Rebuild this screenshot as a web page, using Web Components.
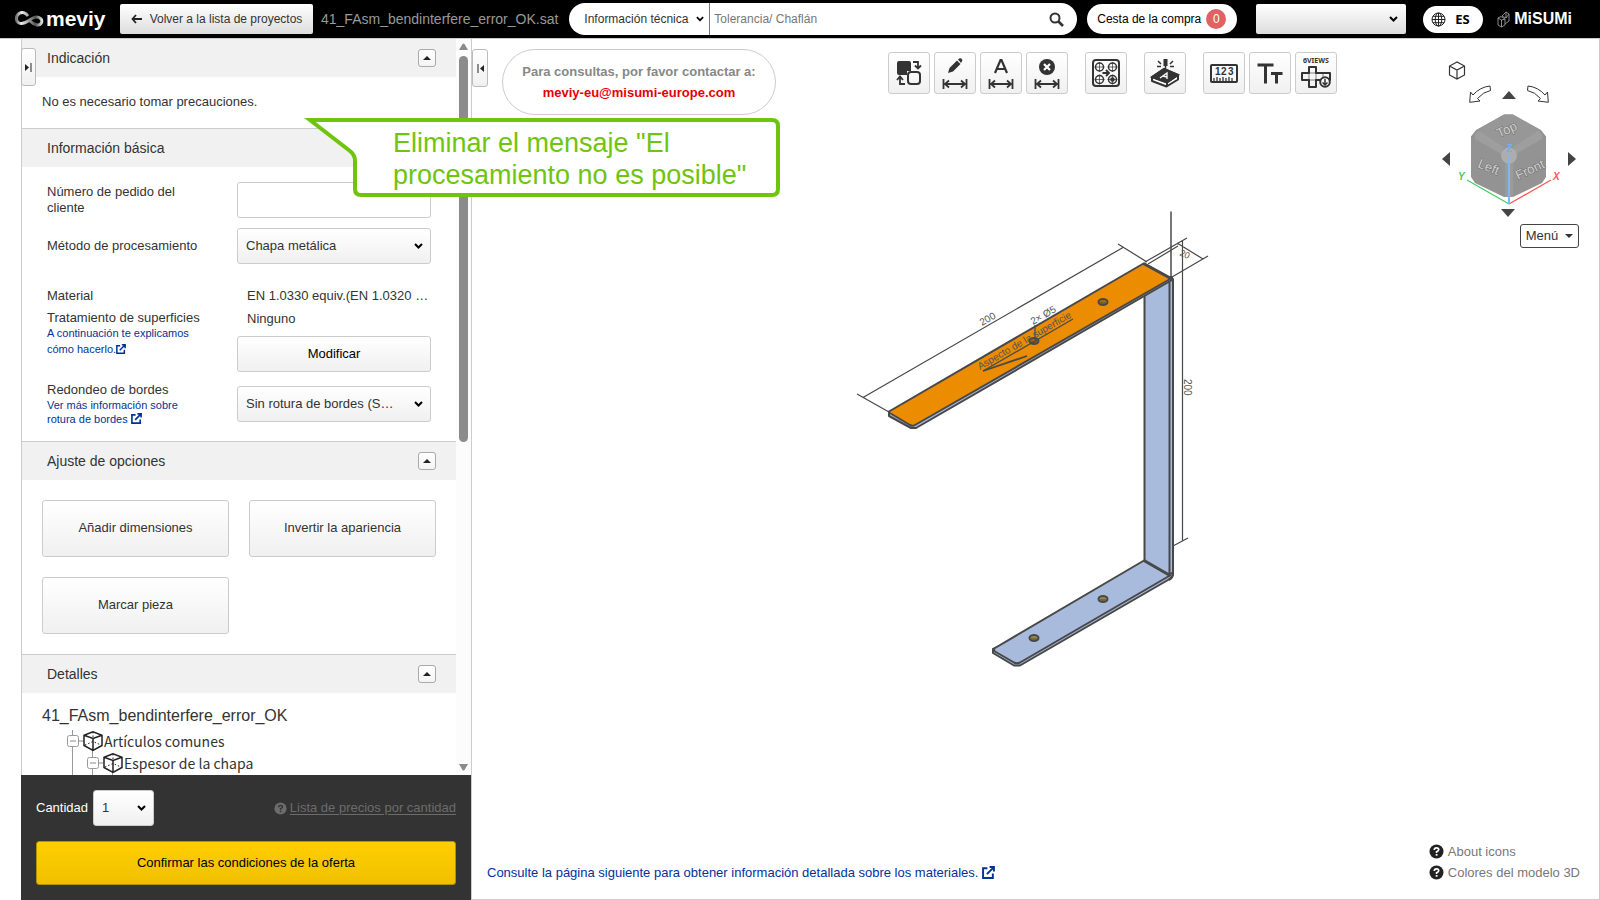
<!DOCTYPE html>
<html lang="es">
<head>
<meta charset="utf-8">
<title>meviy</title>
<style>
html,body{margin:0;height:100%;}
body{font:13px/16px "Liberation Sans",Arial,sans-serif;color:#333;background:#fff;overflow:hidden;}
</style>
</head>
<body>
<meviy-app></meviy-app>
<script>
const base = `
*{box-sizing:border-box}
button,input,select{font:inherit;color:inherit;margin:0}
button{cursor:pointer;padding:0}
a{color:#003399;text-decoration:none}
svg{display:block;flex:none}
.btn,.sel select{border:1px solid #ccc;border-radius:3px;background:linear-gradient(#fff,#f0f0f0)}
.sel{display:grid;align-items:center}
.sel select{grid-area:1/1;appearance:none;width:100%;height:36px;padding:0 36px 0 8px;outline:0;text-overflow:ellipsis}
.sel svg{grid-area:1/1;justify-self:end;margin-right:8px;pointer-events:none}
`;
const chev = `<svg width="9" height="6" viewBox="0 0 9 6"><path d="M1 1l3.5 3.5L8 1" fill="none" stroke="#000" stroke-width="2"/></svg>`;
const ext = s => `<svg class="ext" width="${s}" height="${s}" viewBox="0 0 12 12"><path d="M5 2H1v9h9V7M7 1h4v4M11 1L4.500 7.500" fill="none" stroke="#003399" stroke-width="1.800"/></svg>`;
const help = (c, k) => `<svg width="15" height="15" viewBox="0 0 15 15"><circle cx="7.500" cy="7.500" r="7" fill="${c}"/><path d="M5.300 6Q5.300 3.900 7.500 3.900T9.700 5.800Q9.700 7 7.600 7.700V8.900" fill="none" stroke="${k}" stroke-width="1.700"/><rect x="6.700" y="10" width="1.800" height="1.700" fill="${k}"/></svg>`;

function define(name, css, html) {
  const t = document.createElement('template');
  t.innerHTML = `<style>${base}${css}</style>${html}`;
  customElements.define(name, class extends HTMLElement {
    constructor() { super(); this.attachShadow({mode: 'open'}).append(t.content.cloneNode(true)); }
  });
}

define('meviy-app', `
:host{display:flex;flex-direction:column;height:100vh}
main{flex:1;min-height:0;display:flex;padding-left:21px;position:relative}
view-area{flex:1;min-width:0}
call-out{position:absolute;left:304px;top:79px;z-index:5}
`, `<top-bar></top-bar><main><side-panel></side-panel><view-area></view-area><call-out>Eliminar el mensaje "El procesamiento no es posible"</call-out></main>`);

define('top-bar', `
:host{display:flex;align-items:center;height:39px;padding:0 28px 0 14px;background:#000;border-bottom:1px solid #ccc;font-size:12px;color:#333}
.logo{display:flex;align-items:center;color:#fff;font-weight:700;width:106px;gap:2px;font-size:21px;line-height:32px}
.back{height:30px;width:193px;border:0;border-radius:2px;background:linear-gradient(#fff,#ddd);display:flex;align-items:center;justify-content:center;gap:8px}
.file{font-size:14px;color:#999;margin:0 11px 0 8px;white-space:nowrap}
form{display:flex;align-items:center;flex:1;height:32px;border-radius:16px;background:#fff;overflow:hidden;padding-right:13px}
form .sel{width:141px;border-right:1px solid #777}
form .sel select{border:0;background:none;padding:0 20px 0 15px;height:32px}
form .sel svg{margin-right:5px}
input{flex:1;border:0;outline:0;background:none;min-width:0;padding:0 4px;height:32px}
input::placeholder{color:#777;opacity:1}
form button{border:0;background:none}
.cart{margin-left:10px;width:150px;height:30px;border:0;border-radius:15px;background:#fff;color:#000;display:flex;align-items:center;gap:5px;padding-left:10px}
.cart span{width:20px;height:20px;border-radius:10px;background:#e06262;color:#fff;line-height:20px}
.acct{width:150px;margin-left:19px}
.acct select{height:30px;border:0;border-radius:2px;background:linear-gradient(#fff,#ddd)}
.lang{margin:0 14px 0 17px;width:60px;height:27px;border:0;border-radius:14px;background:#fff;color:#000;display:flex;align-items:center;gap:9px;padding-left:8px;font:700 13px "Noto Sans",sans-serif}
.mis{display:flex;align-items:center;gap:4px;color:#fff;font-weight:700;font-size:16px}
`, `
<a class="logo" href="#"><svg width="30" height="18" viewBox="0 0 30 18"><defs><linearGradient id="g"><stop stop-color="#777"/><stop offset=".2" stop-color="#eee"/><stop offset=".5" stop-color="#999"/><stop offset=".75" stop-color="#555"/><stop offset="1" stop-color="#ddd"/></linearGradient></defs><path d="M14 6C12 2.500 8 1.500 5 3.500C1.500 6 1.500 11 5 13C8 14.500 12 12.500 15 10.500C19 7.500 24 5.500 27 9C29 11.500 27 15.500 23 15C20 14.600 18 13 16 11" fill="none" stroke="url(#g)" stroke-width="3"/></svg>meviy</a>
<button class="back"><svg width="11" height="10" viewBox="0 0 11 10"><path d="M5 1L1.500 5L5 9M1.500 5H11" fill="none" stroke="#222" stroke-width="1.800"/></svg>Volver a la lista de proyectos</button>
<span class="file">41_FAsm_bendinterfere_error_OK.sat</span>
<form><span class="sel"><select aria-label="Tipo"><option>Información técnica</option></select>${chev.replace('width="9"','width="8"')}</span><input aria-label="Buscar" placeholder="Tolerancia/ Chaflán"><button type="button" aria-label="Buscar"><svg width="15" height="15" viewBox="0 0 15 15"><circle cx="6" cy="6" r="4.500" fill="none" stroke="#333" stroke-width="2"/><path d="M9.500 9.500L14 14" stroke="#333" stroke-width="2.600"/></svg></button></form>
<button class="cart">Cesta de la compra<span>0</span></button>
<span class="sel acct"><select aria-label="Cuenta"><option></option></select>${chev}</span>
<button class="lang"><svg width="15" height="15" viewBox="0 0 15 15" fill="none" stroke="#222"><circle cx="7.500" cy="7.500" r="6.500"/><ellipse cx="7.500" cy="7.500" rx="3.300" ry="6.500"/><path d="M7.500 1v13M1 7.500h13M2 4.300h11M2 10.700h11"/></svg>ES</button>
<a class="mis" href="#"><svg width="13" height="17" viewBox="0 0 13 17" fill="none" stroke="#aaa" stroke-width=".8"><path d="M1 7l3-1.500L8 8v6l-3.500 2L1 14zM1 7l3.500 2V16M4.500 9L8 8M5 5l4-4 3 2v7l-4 3M9 1v6L5 5M9 7l3-4"/></svg>MiSUMi</a>`);

define('call-out', `
:host{display:grid;width:477px;height:80px;font-size:27px;line-height:32px;color:#6fc40e}
svg,p{grid-area:1/1}
p{margin:9px 20px 0 89px}
`, `<svg width="477" height="80" viewBox="0 0 477 80"><path d="M6 2H468Q474 2 474 8V71Q474 77 468 77H57Q51 77 51 71V43Q51 37 46 33Z" fill="#fff" stroke="#6fc40e" stroke-width="4" stroke-miterlimit="8"/></svg><p><slot></slot></p>`);

define('panel-section', `
:host{display:block;border-bottom:1px solid #ccc}
header{display:flex;align-items:center;justify-content:space-between;height:38px;padding:0 20px 0 25px;background:#f1f1f1}
h2{margin:0;font-size:14px;font-weight:400}
button{width:18px;height:18px;border:1px solid #aaa;border-radius:3px;background:linear-gradient(#fff,#f4f4f4);display:grid;place-items:center}
`, `<header><h2><slot name="title"></slot></h2><button aria-label="Plegar"><svg width="8" height="4" viewBox="0 0 8 4"><path d="M0 4L4 0l4 4z" fill="#222"/></svg></button></header><slot></slot>`);

define('side-panel', `
:host{display:flex;flex-direction:column;width:450px;flex:none;position:relative}
.wrap{flex:1;min-height:0;display:flex;border-left:1px solid #ccc}
.body{flex:1;min-width:0;overflow:hidden}
.bar{width:15px;background:#fcfcfc;display:flex;flex-direction:column;align-items:center;padding:4px 1px 4px 0}
.bar i{width:9px;border-radius:5px;background:#8b8b8b;height:53%;margin:6px 0 auto}
.tab{position:absolute;left:0;top:9px;width:15px;height:38px;border:1px solid #bbb;border-radius:3px;background:linear-gradient(#fff,#f0f0f0);display:grid;place-items:center}
.note{margin:0;padding:15px 20px 16px;line-height:20px}
`, `
<div class="wrap"><div class="body">
<panel-section><span slot="title">Indicación</span><p class="note">No es necesario tomar precauciones.</p></panel-section>
<panel-section><span slot="title">Información básica</span><basic-form></basic-form></panel-section>
<panel-section><span slot="title">Ajuste de opciones</span><option-buttons></option-buttons></panel-section>
<panel-section><span slot="title">Detalles</span><part-tree></part-tree></panel-section>
</div><div class="bar"><svg width="9" height="7"><path d="M0 7L3.500 1Q4.500 0 5.500 1L9 7z" fill="#8b8b8b"/></svg><i></i><svg width="9" height="7"><path d="M0 0L3.500 6Q4.500 7 5.500 6L9 0z" fill="#8b8b8b"/></svg></div></div>
<quote-footer></quote-footer>
<button class="tab" aria-label="Panel"><svg width="7" height="9" viewBox="0 0 7 9"><path d="M0 1l4 3.500L0 8zM5.500 0h1v9h-1z" fill="#222"/></svg></button>`);

define('basic-form', `
:host{display:grid;grid-template-columns:minmax(0,1fr) 194px;column-gap:34px;row-gap:10px;padding:15px 25px}
input{width:100%;height:36px;border:1px solid #ccc;border-radius:3px;background:#fff}
:host>*{align-self:center}
.l{display:flex;flex-direction:column}
.top{align-self:start;margin-top:11px;line-height:22px}
.lk{font-size:11px;line-height:16px;margin-top:-4px}
.lk2{font-size:11px;line-height:14px}
.ext{display:inline-block;vertical-align:-1px}
.v{display:flex;flex-direction:column}
.v span{padding-left:10px;line-height:22px;margin-bottom:1px;white-space:nowrap;overflow:hidden;text-overflow:ellipsis}
.v .btn{height:36px;margin-top:5px;color:#000}
`, `
<label for="n">Número de pedido del<br>cliente</label><input id="n">
<label for="m">Método de procesamiento</label><span class="sel"><select id="m"><option>Chapa metálica</option></select>${chev}</span>
<div class="l top"><span>Material</span><span>Tratamiento de superficies</span><a class="lk" href="#">A continuación te explicamos<br>cómo hacerlo.${ext(10)}</a></div>
<div class="v top"><span>EN 1.0330 equiv.(EN 1.0320 …</span><span>Ninguno</span><button class="btn">Modificar</button></div>
<div class="l"><label for="r">Redondeo de bordes</label><a class="lk2" href="#">Ver más información sobre<br>rotura de bordes ${ext(11)}</a></div><span class="sel"><select id="r"><option>Sin rotura de bordes (S…</option></select>${chev}</span>`);

define('option-buttons', `
:host{display:grid;grid-template-columns:1fr 1fr;gap:20px;padding:20px}
.btn{height:57px;padding-bottom:2px}
`, `<button class="btn">Añadir dimensiones</button><button class="btn">Invertir la apariencia</button><button class="btn">Marcar pieza</button>`);

const cube = x => `<g transform="translate(${x} 1)" fill="none" stroke="#222" stroke-width="1.500"><path d="M10 .7L1 4.200V14.500L10 19.500L19 14.500V4.200zM1 4.200L10 7.500L19 4.200M10 7.500V19.500"/><path d="M10 1V7M2 14L10 10.500L18 14" stroke-width="1" stroke-dasharray="1.500 2"/></g>`;
const box = x => `<rect x="${x}" y="5.500" width="11" height="11" rx="2" fill="#fff" stroke="#999"/><path d="M${x+2.500} 11h6M${x+11} 11h5" stroke="#888"/>`;
define('part-tree', `
:host{display:block;padding:13px 20px}
h3{margin:0 0 4px;font-size:16px;line-height:20px;font-weight:400}
ul{list-style:none;margin:0;padding:0 0 0 25px;font:14px/22px "Noto Sans CJK JP","Noto Sans",sans-serif}
li{display:flex;height:22px}
`, `<h3>41_FAsm_bendinterfere_error_OK</h3><ul>
<li><svg width="37" height="22"><path d="M5.500 0V22M25.500 18v4" stroke="#999"/>${box(.5)}${cube(16)}</svg>Artículos comunes</li>
<li><svg width="57" height="22"><path d="M5.500 0V22M25.500 0V22M45.500 20v2" stroke="#999"/>${box(20.5)}${cube(36)}</svg>Espesor de la chapa</li>
<li><svg width="77" height="22"><path d="M5.500 0V22M25.500 0V22M45.500 0V22" stroke="#999"/></svg></li></ul>`);

define('quote-footer', `
:host{display:block;background:#333;padding:15px;color:#fff}
.r{display:flex;align-items:center;margin-bottom:15px}
.sel{width:61px;margin-left:5px;color:#333}
.r a{margin-left:auto;display:flex;align-items:center;gap:3px;color:#6c6c6c}
.r u{text-underline-offset:2px}
.ok{width:100%;height:44px;border:1px solid #b39100;border-radius:3px;background:linear-gradient(#ffcf00,#f0c000);color:#000}
`, `<div class="r"><label for="q">Cantidad</label><span class="sel"><select id="q"><option>1</option></select>${chev}</span><a href="#">${help('#6c6c6c','#333').replace('width="15" height="15"','width="13" height="13"')}<u>Lista de precios por cantidad</u></a></div><button class="ok">Confirmar las condiciones de la oferta</button>`);

const dim = `<path d="M8.500 26v10M31.500 26v10M10 31h20M14 27.500L10 31l4 3.500M26 27.500l4 3.500l-4 3.500" fill="none" stroke="#333" stroke-width="1.800"/>`;
const tool = (n, s) => `<button class="btn" aria-label="${n}"><svg width="40" height="40" viewBox="0 0 40 40" fill="none" stroke="#333" stroke-width="2">${s}</svg></button>`;
define('tool-bar', `
:host{display:flex;gap:17px}
div{display:flex;gap:4px}
.btn{width:42px;height:42px}
`, `<div>
${tool('Invertir', `<path d="M10 8h10q2 0 2 2v8h-4v4h-8q-2 0-2-2V10q0-2 2-2z" fill="#333" stroke="none"/><rect x="19" y="19" width="12" height="12" rx="3"/><path d="M24 9h5v6M26 12.500l3 3l3-3M16 31h-5v-7M8 27l3-3.500l3 3.500" stroke-width="1.800"/>`)}
${tool('Editar cota', `<path d="M13 20l1.500-5L22 7.500l3.500 3.500L18 18.500zM23 6.500l1.200-1q1.300-.8 2.500.3t.3 2.500L26 10z" fill="#333" stroke="none"/>${dim}`)}
${tool('Cota automática', `<path d="M14 20L19.500 7h1L26 20M16 16h8" stroke-width="2.200"/>${dim}`)}
${tool('Borrar cota', `<circle cx="20" cy="14" r="8" fill="#333" stroke="none"/><path d="M17 11l6 6M23 11l-6 6" stroke="#fff" stroke-width="2.200"/>${dim}`)}
</div><div>${tool('Agujeros', `<rect x="7" y="7" width="26" height="26" rx="3"/><g stroke-width="1.500"><circle cx="13.500" cy="14" r="4"/><circle cx="26.500" cy="14" r="4"/><circle cx="13.500" cy="26.500" r="4"/><circle cx="26.500" cy="26.500" r="4"/><circle cx="26.500" cy="26.500" r="1.500" fill="#333"/><path d="M13.500 9v10M8.500 14h10M26.500 9v10M21.500 14h10M13.500 21.500v10M8.500 26.500h10M26.500 21.500v10M21.500 26.500h10" stroke-width=".7"/><path d="M16.500 20h6.500M20 17l3 3l-3 3" stroke-width="1.800"/></g>`)}
</div><div>${tool('Marcar', `<path d="M7 24L19 16L33 22L22 29.500zM7 24v4l14.500 5.500L33 26.500v-4M22 29.500v4" fill="#fff" stroke-linejoin="round"/><path d="M7 24L19 16L33 22L22 29.500z" fill="#333"/><path d="M15 25l7-5v6M18 23l4 1" stroke="#fff" stroke-width="1.300"/><path d="M20.500 6v7" stroke-width="4"/><path d="M20.500 13v3M13 8l3 3M28 8l-3 3M12 13.500h4M25 13.500h4" stroke-width="1.500"/>`)}
</div><div>
${tool('Regla', `<rect x="7" y="12" width="26" height="17" rx="1"/><path d="M10 28v-3M13 28v-4M16 28v-3M19 28v-4M22 28v-3M25 28v-4M28 28v-3" stroke-width="1.300"/><text x="11" y="22" font-size="10" font-weight="700" fill="#333" stroke="none" font-family="Liberation Sans">1</text><text x="17" y="22" font-size="10" font-weight="700" fill="#333" stroke="none" font-family="Liberation Sans">2</text><text x="24" y="22" font-size="10" font-weight="700" fill="#333" stroke="none" font-family="Liberation Sans">3</text>`)}
${tool('Texto', `<path d="M7.500 12h16M15.500 12v18.500M21 20.500h11.500M26.500 20.500v10" stroke-width="3"/>`)}
${tool('Seis vistas', `<text x="7" y="10" font-size="7" font-weight="700" fill="#333" stroke="none" font-family="Noto Sans">6VIEWS</text><path d="M13 14h7v6h14v7H20v7h-7v-7H6v-7h7z" stroke-linejoin="round"/><path d="M13 20h7v7h-7zM27 20v7" stroke-width=".6"/><circle cx="29" cy="29" r="4.800" fill="#fff"/><path d="M29 26v6M26.500 29.500l2.500 2.500l2.500-2.500" stroke-width="1.500"/>`)}
</div>`);

define('nav-cube', `
:host{display:flex;flex-direction:column;width:137px}
button{border:0;background:none;display:block}
.home{margin-left:6px;align-self:flex-start}
.t{display:flex;justify-content:center;align-items:center;gap:10px;width:134px;margin-top:5px}
.m{display:flex;justify-content:space-between;align-items:center;width:134px;margin-top:10px;height:92px}
.d{margin:4px 0 0 58px;align-self:flex-start}
.menu{align-self:flex-end;margin-top:6px;width:59px;height:24px;border:1px solid #444;border-radius:3px;display:flex;align-items:center;justify-content:center;gap:7px;background:#fff}
text{font-family:"Liberation Sans",sans-serif}
`, `
<button class="home" aria-label="Inicio"><svg width="18" height="19" viewBox="0 0 18 19" fill="none" stroke="#333" stroke-width="1.200"><path d="M9 1L1.500 5V14L9 18l7.500-4V5zM1.500 5L9 9l7.500-4M9 9v9"/></svg></button>
<div class="t"><button aria-label="Girar a la izquierda"><svg width="22" height="18" viewBox="0 0 22 18" fill="#fff" stroke="#333"><path d="M21 1Q11 2 4 10L1.500 7L.7 17.300L11 16L8.500 13.500Q14 7 21.500 5.500z"/></svg></button><button aria-label="Arriba"><svg width="16" height="9"><path d="M1 9L8 1l7 8z" fill="#444"/></svg></button><button aria-label="Girar a la derecha"><svg width="22" height="18" viewBox="0 0 22 18" fill="#fff" stroke="#333"><path d="M1 1Q11 2 18 10L20.500 7L21.300 17.300L11 16L13.500 13.500Q8 7 .5 5.500z"/></svg></button></div>
<div class="m"><button aria-label="Izquierda"><svg width="8" height="14"><path d="M8 0v14L0 7z" fill="#444"/></svg></button>
<svg width="102" height="92" viewBox="1458 113 102 92"><path d="M1504 114.500h9L1541 130l5 6.500V177l-4 6L1513 197h-9L1475 183l-4-6V136.500l5-6.500z" fill="#939393"/><path d="M1504 114.500h9L1541 131L1511 148.500h-5L1477 131z" fill="#979797"/><path d="M1475 134l4-3l25 16q-3 4-1 8l-28-16zM1542 134l-4-3l-25 16q3 4 1 8l28-16z" fill="#9e9e9e"/><path d="M1505 162h8v35h-8z" fill="#9b9b9b"/><circle cx="1509" cy="155.500" r="8" fill="#adadad"/><g font-size="13" fill="#d0d0d0" stroke="#6e6e6e" stroke-width="1" paint-order="stroke"><text transform="translate(1499 138) rotate(-25)">Top</text><text transform="translate(1477 167) rotate(22)">Left</text><text transform="translate(1518 180) rotate(-25)">Front</text></g><path d="M1509 204L1467 180" stroke="#4c6" stroke-width="1.300"/><path d="M1509 204L1551 180" stroke="#f55" stroke-width="1.300"/><path d="M1509 204V156" stroke="#7ab8f8" stroke-width="2"/><g font-size="10" font-style="italic" font-weight="700"><text x="1458" y="180" fill="#4c6">Y</text><text x="1553" y="180" fill="#f55">X</text><text x="1506" y="152" fill="#6db1f5">Z</text></g></svg>
<button aria-label="Derecha"><svg width="8" height="14"><path d="M0 0v14L8 7z" fill="#444"/></svg></button></div>
<button class="d" aria-label="Abajo"><svg width="16" height="9"><path d="M1 0L8 8l7-8z" fill="#444"/></svg></button>
<button class="menu">Menú<svg width="8" height="4"><path d="M0 0L4 4L8 0z" fill="#333"/></svg></button>`);

const hole = (x, y, c) => `<ellipse cx="${x}" cy="${y}" rx="4.500" ry="3" fill="${c}" stroke="#484848" stroke-width="2"/><path d="M${x-3} ${y+1}h6" stroke="#484848" stroke-width="1"/>`;
define('part-model', `:host{display:block}svg{width:100%;height:100%}text{font-family:"Liberation Sans",sans-serif;fill:#555}`, `
<svg viewBox="472 39 1127 860" preserveAspectRatio="xMidYMin meet" fill="none" stroke="#484848" stroke-width="2" stroke-linejoin="round">
<path d="M1171 211.500V278" stroke="#777"/>
<path d="M1144.500 290V561L1170 576V277z" fill="#a9bbdd"/>
<path d="M1170 279h3V574q0 4-4 6" fill="#a9bbdd"/><path d="M1169.500 279V576" stroke-width="2"/><path d="M1173 279V573" stroke-width="2"/>
<path d="M993 649V653L1014 665.500h6L1168 580q5-3 5-7L1168 574z" fill="#a9bbdd"/>
<path d="M995 648L1144 560.500L1170 575.500L1020 662.500q-3 1.500-6 0L995 651.500q-2-2 0-3.500z" fill="#a9bbdd"/>
<path d="M1144 560.500L1170 575.500" stroke-width="3"/>
<path d="M889 412V416L911 428h5L1172 280V277z" fill="#a9bbdd"/>
<path d="M889 411.500L1143.500 263.500L1171 278.500L915 425q-2 1.500-5 0L889 412.500z" fill="#ec8c00"/>
<path d="M1143.500 263.500L1171 278.500" stroke-width="3"/>
${hole(1103,302,'#a87300')}${hole(1034,341,'#a87300')}${hole(1103,599,'#9c8740')}${hole(1034,638,'#9c8740')}
<g stroke-width="1.200"><path d="M863 397.500L1123 247.500M857 394L889 412M1118 244L1147 262M1145 262L1187 238M1148 264L1178 246M1177 243L1203 259M1172 277L1208 256M1182.500 240V541M1173 546L1188 538M1035 325V341M983 371L1073 319"/></g><path d="M983 371L1027 356" stroke-width="1.800"/>
<g stroke="none"><text font-size="10" transform="translate(982 326) rotate(-30)">200</text><text font-size="10" transform="translate(1033 325) rotate(-30)">2× Ø5</text><text font-size="10" transform="translate(980 370) rotate(-30)">Aspecto de la superficie</text><text font-size="10" transform="translate(1184 379) rotate(90)">200</text><text font-size="9" transform="translate(1179 255) rotate(25)">20</text></g>
</svg>`);

define('view-area', `
:host{display:flex;flex-direction:column;justify-content:space-between;position:relative;border:1px solid #ccc;border-top:0}
part-model{position:absolute;inset:0;pointer-events:none}
.top{display:flex;align-items:flex-start;padding-right:20px}
.tab{width:16px;height:38px;margin-top:10px;border:1px solid #bbb;border-radius:3px;background:linear-gradient(#fff,#f0f0f0);display:grid;place-items:center}
.contact{margin:10px auto 0 14px;width:274px;height:66px;border:1px solid #ccc;border-radius:33px;font-weight:700;line-height:21px;color:#888;text-align:center;padding-top:11px}
.contact a{color:#e60000;display:block}
tool-bar{margin-top:13px}
nav-cube{margin:22px 0 0 105px}
.bot{display:flex;justify-content:space-between;align-items:flex-end;padding:0 19px 16px 15px;line-height:21px}
.bot a{display:flex;align-items:center;gap:4px}
.bot div a{color:#777}
`, `
<part-model></part-model>
<div class="top"><button class="tab" aria-label="Vista"><svg width="7" height="9" viewBox="0 0 7 9"><path d="M7 1L3 4.500L7 8zM.5 0h1v9h-1z" fill="#222"/></svg></button>
<div class="contact">Para consultas, por favor contactar a:<a href="mailto:meviy-eu@misumi-europe.com">meviy-eu@misumi-europe.com</a></div>
<tool-bar></tool-bar><nav-cube></nav-cube></div>
<div class="bot"><a href="#">Consulte la página siguiente para obtener información detallada sobre los materiales. ${ext(13)}</a><div><a href="#">${help('#222','#fff')}About icons</a><a href="#">${help('#222','#fff')}Colores del modelo 3D</a></div></div>`);
</script>
</body>
</html>
